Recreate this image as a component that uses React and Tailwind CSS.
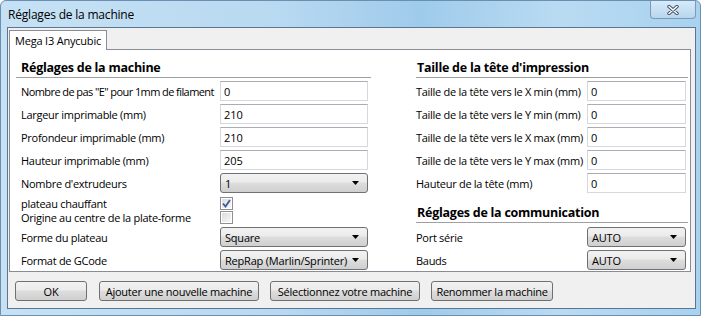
import React from "react";

const FONT = "font-['Segoe_UI','Open_Sans',sans-serif]";

function TextBox({ value, w }) {
  return (
    <div
      className={`h-[20px] ${w} bg-white border border-[#d5d8de] border-t-[#abadb3] flex items-center pl-[3px] text-[11px] text-black leading-none`}
    >
      {value}
    </div>
  );
}

function Arrow() {
  return (
    <svg width="7" height="4" viewBox="0 0 7 4" className="shrink-0">
      <path d="M0 0 H7 L3.5 4 Z" fill="#000" />
    </svg>
  );
}

function Select({ value, w }) {
  return (
    <div
      className={`h-[20px] ${w} rounded-[3px] border border-[#707070] bg-[linear-gradient(#f2f2f2_0%,#ebebeb_45%,#dddddd_50%,#cfcfcf_100%)] flex items-center justify-between pl-[4px] pr-[8px] text-[11px] tracking-[-0.2px] text-black leading-none`}
    >
      <span>{value}</span>
      <Arrow />
    </div>
  );
}

function Check({ checked }) {
  return (
    <div className="w-[13px] h-[13px] border border-[#8f8f8f] bg-white p-[1px]">
      <div className="w-full h-full bg-[linear-gradient(135deg,#dcdcdc,#f7f7f7)] flex items-center justify-center">
        {checked && (
          <svg width="9" height="9" viewBox="0 0 9 9">
            <path d="M1 4.5 L3.5 7.5 L8 1" fill="none" stroke="#3b5998" strokeWidth="1.8" />
          </svg>
        )}
      </div>
    </div>
  );
}

function Button({ label, w }) {
  return (
    <div
      className={`h-[20px] ${w} rounded-[3px] border border-[#707070] bg-[linear-gradient(#f2f2f2_0%,#ebebeb_45%,#dddddd_50%,#cfcfcf_100%)] flex items-center justify-center text-[11px] tracking-[-0.25px] text-black leading-none`}
    >
      {label}
    </div>
  );
}

function Header({ text, pl }) {
  return (
    <div className={`h-[18px] border-b border-[#a0a0a0] flex items-center ${pl} text-[12.5px] tracking-[-0.25px] font-bold text-black leading-none`}>
      {text}
    </div>
  );
}

function LeftRow({ label, children, h = "h-[20px]", mt = "mt-[3px]", track = "tracking-[-0.28px]" }) {
  return (
    <div className={`flex items-center ${h} ${mt}`}>
      <div className={`w-[204px] pl-[5px] text-[11px] ${track} text-black leading-none whitespace-nowrap`}>{label}</div>
      {children}
    </div>
  );
}

function RightRow({ label, children, mt = "mt-[3px]" }) {
  return (
    <div className={`flex items-center h-[20px] ${mt}`}>
      <div className="w-[171px] text-[11px] tracking-[-0.28px] text-black leading-none whitespace-nowrap">{label}</div>
      {children}
    </div>
  );
}

export default function App() {
  return (
    <div
      className={`w-[701px] h-[316px] overflow-hidden ${FONT} bg-[linear-gradient(90deg,#c6e1f4_0%,#b8d9f1_40%,#9fcbeb_60%,#b9dbf2_80%,#a8d2ef_100%)] border border-[#6a8fb0] rounded-t-[6px] flex flex-col`}
    >
      {/* title bar */}
      <div className="h-[26px] flex items-center justify-between pl-[7px] pr-[4px]">
        <span className="text-[12px] tracking-[-0.2px] text-black leading-none mt-[2px]">Réglages de la machine</span>
        <div className="self-start w-[46px] h-[18px] rounded-b-[4px] border border-t-0 border-[#7d9ab4] bg-[linear-gradient(#d8eaf8,#b7d6ef)] flex items-center justify-center">
          <svg width="12" height="10" viewBox="0 0 12 10">
            <path d="M2 1.5 L10 8.5 M10 1.5 L2 8.5" stroke="#3e4e62" strokeWidth="3.4" strokeLinecap="round" />
            <path d="M2 1.5 L10 8.5 M10 1.5 L2 8.5" stroke="#ffffff" strokeWidth="1.6" strokeLinecap="round" />
          </svg>
        </div>
      </div>

      {/* client area */}
      <div className="ml-[6px] w-[689px] h-[282px] border border-[#5d7590] bg-[#f0f0f0] flex flex-col">
        {/* tab */}
        <div className="mt-[2px] ml-[1px] flex">
          <div className="relative z-10 -mb-[1px] h-[20px] w-[98px] border border-b-0 border-[#898c95] bg-white flex items-center pl-[5px] text-[11px] tracking-[-0.2px] text-black leading-none">
            Mega I3 Anycubic
          </div>
        </div>
        {/* panel */}
        <div className="ml-[1px] w-[682px] h-[223px] border border-[#898c95] bg-white flex pt-[10px]">
          <div className="ml-[6px] w-[355px] flex flex-col">
            <Header text="Réglages de la machine" pl="pl-[5px]" />
            <LeftRow label={'Nombre de pas "E" pour 1mm de filament'} track="tracking-[-0.58px]">
              <TextBox value="0" w="w-[148px]" />
            </LeftRow>
            <LeftRow label="Largeur imprimable (mm)">
              <TextBox value="210" w="w-[148px]" />
            </LeftRow>
            <LeftRow label="Profondeur imprimable (mm)">
              <TextBox value="210" w="w-[148px]" />
            </LeftRow>
            <LeftRow label="Hauteur imprimable (mm)">
              <TextBox value="205" w="w-[148px]" />
            </LeftRow>
            <LeftRow label="Nombre d'extrudeurs">
              <Select value="1" w="w-[148px]" />
            </LeftRow>
            <LeftRow label="plateau chauffant" h="h-[14px]" mt="mt-[3px]">
              <Check checked />
            </LeftRow>
            <LeftRow label="Origine au centre de la plate-forme" h="h-[14px]" mt="mt-0">
              <Check />
            </LeftRow>
            <LeftRow label="Forme du plateau">
              <Select value="Square" w="w-[148px]" />
            </LeftRow>
            <LeftRow label="Format de GCode">
              <Select value="RepRap (Marlin/Sprinter)" w="w-[148px]" />
            </LeftRow>
          </div>
          <div className="ml-[45px] w-[272px] flex flex-col">
            <Header text="Taille de la tête d'impression" pl="pl-[1px]" />
            <RightRow label="Taille de la tête vers le X min (mm)">
              <TextBox value="0" w="w-[99px]" />
            </RightRow>
            <RightRow label="Taille de la tête vers le Y min (mm)">
              <TextBox value="0" w="w-[99px]" />
            </RightRow>
            <RightRow label="Taille de la tête vers le X max (mm)">
              <TextBox value="0" w="w-[99px]" />
            </RightRow>
            <RightRow label="Taille de la tête vers le Y max (mm)">
              <TextBox value="0" w="w-[99px]" />
            </RightRow>
            <RightRow label="Hauteur de la tête (mm)">
              <TextBox value="0" w="w-[99px]" />
            </RightRow>
            <div className="mt-[12px]">
              <Header text="Réglages de la communication" pl="pl-[1px]" />
            </div>
            <RightRow label="Port série" mt="mt-[4px]">
              <Select value="AUTO" w="w-[99px]" />
            </RightRow>
            <RightRow label="Bauds">
              <Select value="AUTO" w="w-[99px]" />
            </RightRow>
          </div>
        </div>
        {/* buttons */}
        <div className="mt-[9px] ml-[7px] flex">
          <Button label="OK" w="w-[72px]" />
          <div className="ml-[12px]"><Button label="Ajouter une nouvelle machine" w="w-[160px]" /></div>
          <div className="ml-[11px]"><Button label="Sélectionnez votre machine" w="w-[150px]" /></div>
          <div className="ml-[11px]"><Button label="Renommer la machine" w="w-[122px]" /></div>
        </div>
      </div>
    </div>
  );
}
